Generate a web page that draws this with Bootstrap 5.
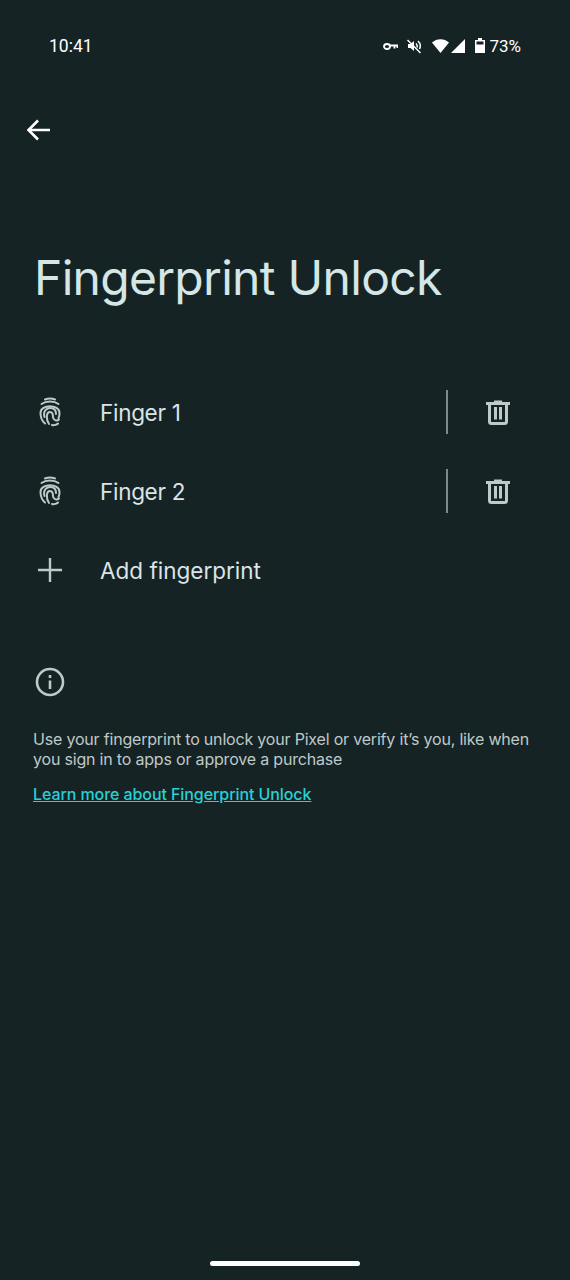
<!DOCTYPE html>
<html lang="en">
<head>
    <meta charset="UTF-8">
    <meta name="viewport" content="width=device-width, initial-scale=1.0">
    <title>Fingerprint Unlock</title>
    <link rel="stylesheet" href="https://cdn.jsdelivr.net/npm/bootstrap@5.3.2/dist/css/bootstrap.min.css">
    <style>
        body {
            background-color: #162324;
            color: #dbe4e6;
            font-family: Inter, Roboto, sans-serif;
            height: 1280px;
            overflow: hidden;
        }
        .phone-screen {
            height: 1280px;
        }
        .status-bar {
            height: 92px;
            padding: 34px 49px 0 49px;
            color: #fff;
            font-family: Roboto, sans-serif;
            font-size: 17px;
            line-height: 24px;
        }
        .status-time {
            font-size: 17.5px;
        }
        .key-icon { margin-right: 9px; }
        .mute-icon { margin-right: 11px; }
        .wifi-icon { margin-right: 1px; }
        .signal-icon { margin-right: 10px; }
        .battery-icon { margin-right: 4px; }
        .back-row {
            height: 76px;
            padding-left: 26px;
        }
        .page-title {
            font-size: 48px;
            font-weight: 400;
            line-height: 60px;
            letter-spacing: -0.7px;
            color: #d5e6e6;
            margin: 80px 0 0 34px;
        }
        .finger-list {
            margin-top: 64px;
        }
        .finger-row {
            height: 79px;
            padding-left: 34px;
            padding-right: 60px;
        }
        .row-icon {
            width: 32px;
            margin-right: 34px;
            color: #bfc9c9;
        }
        .print-icon {
            margin-left: 4px;
        }
        .row-label {
            font-size: 22.5px;
            padding-top: 2px;
            color: #dbe4e6;
        }
        .finger-name {
            letter-spacing: -0.3px;
        }
        .row-sep {
            width: 2px;
            height: 44px;
            background-color: #7d8a8b;
            margin-right: 38px;
        }
        .info-block {
            padding: 0 34px;
            margin-top: 57px;
        }
        .info-text {
            font-size: 16px;
            line-height: 20px;
            color: #bfc9c9;
            margin: 31px 0 13px -1px;
            letter-spacing: -0.19px;
            white-space: nowrap;
        }
        .info-link {
            display: block;
            font-size: 16px;
            font-weight: 500;
            line-height: 24px;
            color: #27d1d6;
            margin-left: -1px;
            letter-spacing: -0.08px;
        }
        .home-pill {
            width: 150px;
            height: 5px;
            border-radius: 3px;
            background-color: #fff;
            position: absolute;
            left: 210px;
            top: 1261px;
        }
    </style>
</head>
<body>
    <div class="phone-screen position-relative">
        <div class="status-bar d-flex justify-content-between align-items-start">
            <span class="status-time">10:41</span>
            <div class="d-flex align-items-center">
                <svg class="key-icon" width="15" height="24" viewBox="0 0 15 24" fill="none" stroke="#fff" stroke-width="1.8"><ellipse cx="4" cy="12.500" rx="3" ry="2.500"/><path d="M7 11.500h7.500v2.500M11.500 11.500v3"/></svg>
                <svg class="mute-icon" width="14" height="24" viewBox="0 0 14 24" fill="none" stroke="#fff" stroke-width="1.500"><path d="M1 10v4h2.500l3.500 3V7L3.500 10z" fill="#fff" stroke="none"/><path d="M9 9.500a4 4 0 0 1 1 4M11 7a7 7 0 0 1 1.500 8M.5 6l13 13"/></svg>
                <svg class="wifi-icon" width="17" height="24" viewBox="0 0 17 24"><path d="M0 8.500C4.700 4 12.300 4 17 8.500L8.500 19z" fill="#fff"/></svg>
                <svg class="signal-icon" width="15" height="24" viewBox="0 0 15 24"><path d="M15 5v14H1z" fill="#fff"/></svg>
                <svg class="battery-icon" width="10" height="24" viewBox="0 0 10 24"><path d="M3 4h4v2h3v13H0V6h3z" fill="#fff"/><path d="M1.500 7.500h7v3h-7z" fill="#162324"/></svg>
                <span>73%</span>
            </div>
        </div>

        <div class="back-row d-flex align-items-center">
            <svg width="26" height="24" viewBox="0 0 26 24" fill="none" stroke="#fff" stroke-width="2.600"><path d="M24 12H3M12 2.500 2.500 12l9.500 9.500"/></svg>
        </div>

        <h1 class="page-title">Fingerprint Unlock</h1>

        <div class="finger-list">
            <div class="finger-row d-flex align-items-center">
                <div class="row-icon d-flex">
                    <svg class="print-icon" width="24" height="30" viewBox="-1 -1 24 30" fill="none" stroke="currentColor" stroke-width="2" stroke-linecap="round"><path d="M6 1.500C9 .4 13 .4 16 1.500"/><path d="M2.500 6C7 2.800 15 2.800 19.500 6"/><path d="M6 25.500C3 23 1.500 19 1.500 15C1.500 6 20.500 6 20.500 15C20.500 17 20 19 19.500 20"/><path d="M5.500 19C3.500 12 9 10 11 10C15 10 17 12.500 17 16"/><path d="M10 26C7 22 7 14 11 14C14 14 14 17 14 19C14 22 17.500 23.500 20 21.500"/><path d="M13 27C15 27.500 18 26.500 19 25.500"/></svg>
                </div>
                <span class="row-label finger-name flex-grow-1">Finger 1</span>
                <div class="row-sep"></div>
                <svg width="24" height="26" viewBox="0 0 24 26" fill="none" stroke="#bfc9c9" stroke-width="3"><path d="M0 4.500h24"/><path d="M8 3h8"/><path d="M3.500 4.500v18a2 2 0 0 0 2 2h13a2 2 0 0 0 2-2v-18"/><path d="M9.500 8v12.500M14.500 8v12.500"/></svg>
            </div>
            <div class="finger-row d-flex align-items-center">
                <div class="row-icon d-flex">
                    <svg class="print-icon" width="24" height="30" viewBox="-1 -1 24 30" fill="none" stroke="currentColor" stroke-width="2" stroke-linecap="round"><path d="M6 1.500C9 .4 13 .4 16 1.500"/><path d="M2.500 6C7 2.800 15 2.800 19.500 6"/><path d="M6 25.500C3 23 1.500 19 1.500 15C1.500 6 20.500 6 20.500 15C20.500 17 20 19 19.500 20"/><path d="M5.500 19C3.500 12 9 10 11 10C15 10 17 12.500 17 16"/><path d="M10 26C7 22 7 14 11 14C14 14 14 17 14 19C14 22 17.500 23.500 20 21.500"/><path d="M13 27C15 27.500 18 26.500 19 25.500"/></svg>
                </div>
                <span class="row-label finger-name flex-grow-1">Finger 2</span>
                <div class="row-sep"></div>
                <svg width="24" height="26" viewBox="0 0 24 26" fill="none" stroke="#bfc9c9" stroke-width="3"><path d="M0 4.500h24"/><path d="M8 3h8"/><path d="M3.500 4.500v18a2 2 0 0 0 2 2h13a2 2 0 0 0 2-2v-18"/><path d="M9.500 8v12.500M14.500 8v12.500"/></svg>
            </div>
            <div class="finger-row d-flex align-items-center">
                <div class="row-icon d-flex">
                    <svg width="32" height="32" viewBox="0 0 32 32" fill="none" stroke="currentColor" stroke-width="2.400"><path d="M4 16h24M16 4v24"/></svg>
                </div>
                <span class="row-label flex-grow-1">Add fingerprint</span>
            </div>
        </div>

        <div class="info-block">
            <svg class="d-block" width="32" height="32" viewBox="0 0 32 32" fill="none" stroke="#bfc9c9" stroke-width="2.600"><circle cx="16" cy="16" r="13"/><path d="M16 14.500V23M16 9v3"/></svg>
            <p class="info-text">Use your fingerprint to unlock your Pixel or verify it’s you, like when<br>you sign in to apps or approve a purchase</p>
            <a class="info-link" href="#">Learn more about Fingerprint Unlock</a>
        </div>

        <div class="home-pill"></div>
    </div>
    <script src="https://cdn.jsdelivr.net/npm/bootstrap@5.3.2/dist/js/bootstrap.bundle.min.js"></script>
</body>
</html>
